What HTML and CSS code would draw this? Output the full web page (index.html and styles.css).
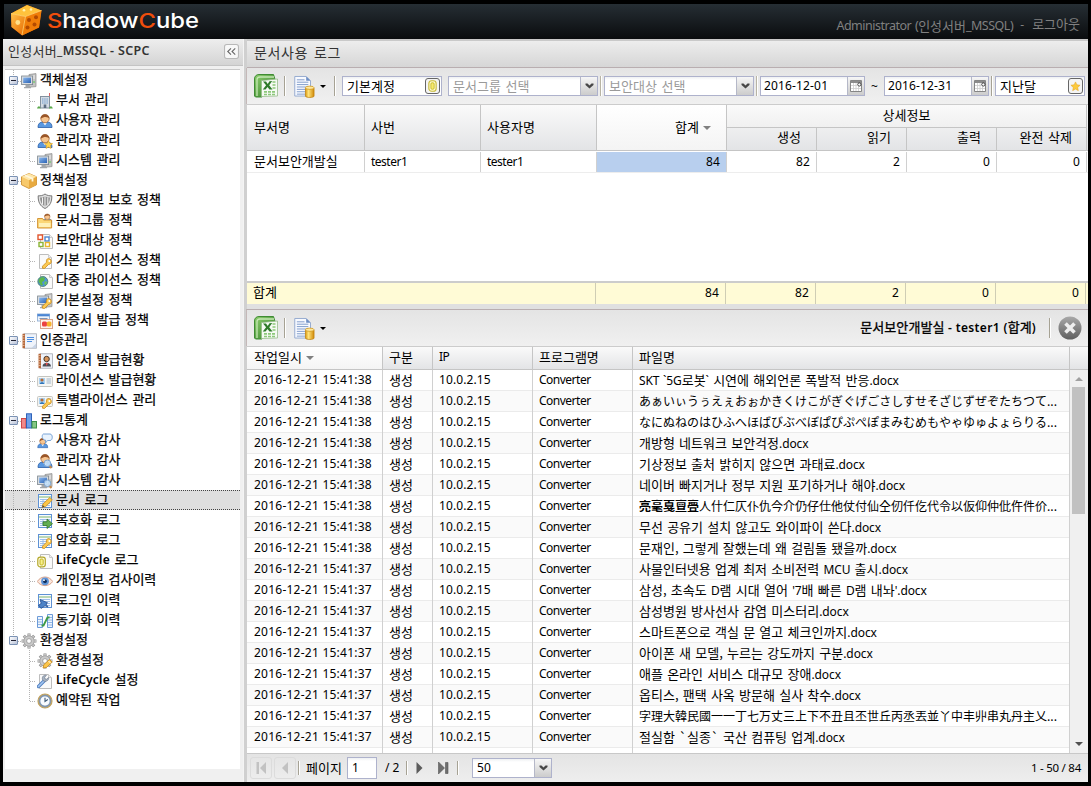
FILE: index.html
```html
<!DOCTYPE html>
<html lang="ko">
<head>
<meta charset="utf-8">
<title>ShadowCube</title>
<link rel="stylesheet" href="styles.css">
</head>
<body>
<svg class="sprite" width="0" height="0">
  <defs>
    <linearGradient id="g-or" x1="0" y1="0" x2="1" y2="1"><stop offset="0" stop-color="#ffc04a"/><stop offset="1" stop-color="#e86a00"/></linearGradient>
    <linearGradient id="g-gr" x1="0" y1="0" x2="1" y2="1"><stop offset="0" stop-color="#8fcf70"/><stop offset="1" stop-color="#2f7d24"/></linearGradient>
    <linearGradient id="g-cl" x1="0" y1="0" x2="0" y2="1"><stop offset="0" stop-color="#a8a8a8"/><stop offset="1" stop-color="#606060"/></linearGradient>
    <linearGradient id="g-db" x1="0" y1="0" x2="1" y2="0"><stop offset="0" stop-color="#d99a10"/><stop offset=".35" stop-color="#ffe27a"/><stop offset="1" stop-color="#d08a08"/></linearGradient>
    <linearGradient id="g-bl" x1="0" y1="0" x2="1" y2="1"><stop offset="0" stop-color="#8bb8ee"/><stop offset="1" stop-color="#2a62b4"/></linearGradient>
  </defs>
  <symbol id="p-page" viewBox="0 0 16 16"><path d="M2.5 1.5h9l3 3v11h-12z" fill="#fafafa" stroke="#bdbdbd"/><path d="M11.500 1.500v3h3" fill="#eee" stroke="#ccc"/></symbol>
  <symbol id="p-key" viewBox="0 0 16 16"><path d="M11.500 5.500a3 3 0 0 1 1.500 5.500l-1.500.5-4 4-2-.3v-2l4-4c-.6-2 .6-3.600 2-3.700z" fill="#fbc850" stroke="#c98a20" stroke-width=".8"/><circle cx="12.300" cy="8" r=".9" fill="#fff"/></symbol>
  <symbol id="p-user" viewBox="0 0 16 16"><path d="M1 14.500c0-4 2-5.500 5-5.500h4c3 0 5 1.500 5 5.500z" fill="#5a98e0" stroke="#2a5faa" stroke-width=".8"/><path d="M6 9.500l2 3 2-3z" fill="#fff"/><circle cx="8" cy="5.600" r="4.200" fill="#f7c590" stroke="#9a5a2c" stroke-width=".7"/><path d="M3.700 5.800C3.200 0 12.800 0 12.300 5.800c-1-2-5-2.800-8.600 0z" fill="#9a5628"/></symbol>
  <symbol id="p-pc" viewBox="0 0 16 16"><path d="M8 1.500l7-.9v13l-7 .6z" fill="#c4c4c4" stroke="#8c8c8c" stroke-width=".7"/><path d="M10 3h4M12 5h2" stroke="#eee"/><rect x=".6" y="3" width="11" height="8.600" fill="#d8dce0" stroke="#7c858e" stroke-width=".8"/><rect x="2.200" y="4.600" width="7.800" height="5.400" fill="url(#g-bl)"/><path d="M4.500 12h3.500v2H10v1.200H3V14h1.500z" fill="#a2a6aa"/><circle cx="13" cy="9" r=".8" fill="#4c4"/></symbol>
  <symbol id="p-sheet" viewBox="0 0 16 16"><rect x="1.500" y="1.500" width="13" height="13" fill="#f8fbff" stroke="#5f92d4"/><path d="M2 4h12" stroke="#7fb56d"/><path d="M3 6.500h10M3 8.500h10M3 10.500h10M3 12.500h10M6 6v7" stroke="#96b9e6" stroke-width=".9"/></symbol>
  <symbol id="p-card" viewBox="0 0 16 16"><rect x=".6" y="3.500" width="14.800" height="10" rx=".8" fill="#f7f7f4" stroke="#c5c5c0"/><rect x="2" y="5" width="6" height="6" fill="#a9d1f2"/><circle cx="5" cy="7" r="1.600" fill="#b36c3a"/><path d="M2.800 11c0-2.500 4.400-2.500 4.400 0z" fill="#2e74b8"/><path d="M9.500 6h4.500M9.500 8h4.500M9.500 10h4.500" stroke="#9fb6cc"/></symbol>
  <symbol id="p-gear" viewBox="0 0 16 16"><path d="M8 .6v14.800M.6 8h14.800M2.800 2.800l10.400 10.400M13.200 2.800L2.800 13.200" stroke="#8c8c8c" stroke-width="3"/><path d="M8 1.100v13.800M1.100 8h13.800M3.200 3.200l9.600 9.600M12.800 3.200l-9.600 9.600" stroke="#c9c9c9" stroke-width="1.800"/><circle cx="8" cy="8" r="5.200" fill="#c9c9c9" stroke="#989898" stroke-width=".7"/><circle cx="8" cy="8" r="2.400" fill="#fff" stroke="#929292" stroke-width=".8"/></symbol>
  <symbol id="p-lens" viewBox="0 0 16 16"><path d="M12 12.500l2.500 2.500" stroke="#c88a4a" stroke-width="2"/><circle cx="10.400" cy="10.300" r="3.300" fill="#c6e2fb" fill-opacity=".9" stroke="#7fa5d0"/></symbol>
  <symbol id="p-book" viewBox="0 0 16 16"><rect x="3" y=".8" width="12.400" height="14.400" fill="#eff3fa" stroke="#a4a9b2" stroke-width=".8"/><rect x="1.500" y=".8" width="2.500" height="14.400" fill="#b5673b"/><path d="M.8 2.500h2.700M.8 5h2.700M.8 7.500h2.700M.8 10h2.700M.8 12.500h2.700" stroke="#e8c3a4" stroke-width=".8"/></symbol>

  <symbol id="i-dept" viewBox="0 0 16 16"><path d="M12.500 0v3" stroke="#e06060"/><rect x="3.500" y="3.500" width="9" height="11.500" fill="#d5dce4" stroke="#83909e"/><path d="M5 6h6M5 8h6M5 10h6" stroke="#6f9bcc" stroke-dasharray="1.500 .7"/><rect x="6.700" y="11.500" width="2.600" height="3.500" fill="#5b6c80"/><path d="M0 15.400c1-3 3-3 3.600 0zM12 15.400c.8-3 3-3 3.800 0z" fill="#5aa84a"/></symbol>
  <symbol id="i-admin" viewBox="0 0 16 16"><use href="#p-user"/><path d="M11.500 7.700l1.300 2.500 2.800.4-2 2 .4 2.800-2.500-1.300L9 15.400l.4-2.800-2-2 2.800-.4z" fill="#ffd34e" stroke="#dd9c1c" stroke-width=".6"/></symbol>
  <symbol id="i-box" viewBox="0 0 16 16"><path d="M8 .5l7.500 3.300v8L8 15.500.5 11.800v-8z" fill="#f7c96c" stroke="#c98622" stroke-width=".8"/><path d="M8 .5l7.500 3.300L8 7.200.5 3.800z" fill="#ffe7a8"/><path d="M8 7.200v8.100l7.300-3.600V3.900z" fill="#e8aa40"/><path d="M4 2.300l7.500 3.300v3" stroke="#fff6da" stroke-width="1.800" fill="none"/></symbol>
  <symbol id="i-shield" viewBox="0 0 16 16"><path d="M8 1c2 1.500 4.500 2 6.800 1.800C15 9 13 13 8 15.500 3 13 1 9 1.200 2.800 3.500 3 6 2.500 8 1z" fill="#e0e0e0" stroke="#777"/><path d="M8 3c1.500 1 3 1.500 5 1.500-.2 4-1.500 7-5 9-3.500-2-4.800-5-5-9C5 4.500 6.700 4 8 3z" fill="#8f8f8f"/><path d="M5.500 4.500v7M8 3v10.500M10.800 4.500v7" stroke="#f4f4f4"/></symbol>
  <symbol id="i-group" viewBox="0 0 16 16"><use href="#p-user" x="5" y="0" width="10.500" height="10.500"/><path d="M.6 5.500h5l1 1.500h8v8H.6z" fill="#fbd777" stroke="#d08b28" stroke-width=".9"/><path d="M2 10h11.500v4H2z" fill="#fff1b8"/></symbol>
  <symbol id="i-target" viewBox="0 0 16 16"><use href="#p-page" x="1"/><g fill="#fff" stroke-width="1.400"><rect x="1" y="2" width="4.500" height="4.500" stroke="#e2552e"/><rect x="8" y="4" width="4" height="4" stroke="#4d87d0"/><rect x="2" y="9.500" width="4" height="4" stroke="#8ab437"/><rect x="8.500" y="9.500" width="4" height="4" stroke="#e8b62e"/></g></symbol>
  <symbol id="i-lic" viewBox="0 0 16 16"><use href="#p-page"/><use href="#p-key"/></symbol>
  <symbol id="i-multi" viewBox="0 0 16 16"><use href="#p-page" x="1"/><circle cx="5.800" cy="8.500" r="5" fill="#4d94d8" stroke="#457a60" stroke-width=".8"/><path d="M2 6l3-2 3 1-1 3-2 1 1 3-2 .5-2.500-4z" fill="#5cb84a"/><path d="M8 8l2 1-1 3-2-1z" fill="#6cc455"/></symbol>
  <symbol id="i-pckey" viewBox="0 0 16 16"><use href="#p-pc"/><use href="#p-key"/></symbol>
  <symbol id="i-cert" viewBox="0 0 16 16"><rect x=".5" y="1" width="12" height="7" fill="#eef4fb" stroke="#9ab6da"/><path d="M.5 2.200h12" stroke="#4b86d4" stroke-width="2.200"/><path d="M2.500 5.500h8" stroke="#7f95b6"/><rect x="3.500" y="6.500" width="12" height="9" fill="#fff3ec" stroke="#d9a58c"/><rect x="5" y="8.500" width="5" height="5" rx="1.500" fill="#ec4242"/><rect x="9.800" y="8.500" width="4.700" height="5" rx="1.500" fill="#f7b52c"/></symbol>
  <symbol id="i-note" viewBox="0 0 16 16"><use href="#p-book"/><path d="M6 4.500h7M6 6.500h7M6 8.500h5" stroke="#4f8fe0" stroke-width="1.200"/><path d="M10.500 15l4.700-4.500V15z" fill="#c8d4e6"/></symbol>
  <symbol id="i-certs" viewBox="0 0 16 16"><use href="#p-book"/><circle cx="9.600" cy="6" r="2.700" fill="#d8955a" stroke="#46372c"/><path d="M5.500 13.500c0-5 8.500-5 8.500 0z" fill="#4a4e56"/><path d="M8.500 10l1.200 3 1.200-3z" fill="#e55"/></symbol>
  <symbol id="i-special" viewBox="0 0 16 16"><use href="#p-card"/><use href="#p-key"/></symbol>
  <symbol id="i-chart" viewBox="0 0 16 16"><rect x=".5" y="5.500" width="4.500" height="9.500" fill="#f08a8a" stroke="#d04848"/><rect x="5.500" y=".8" width="5" height="14.200" fill="#6fa0e8" stroke="#2f62b8"/><rect x="11" y="8.500" width="4.500" height="6.500" fill="#84c684" stroke="#3c9048"/></symbol>
  <symbol id="i-uaudit" viewBox="0 0 16 16"><use href="#p-user" x="0" y="4" width="11.500" height="12"/><path d="M6.500 1h6.500c3 0 3 6.500 0 6.500h-2.500L8.500 10l.2-2.800C4.500 7 4.500 1.500 6.500 1z" fill="#e9f3fd" stroke="#6c9bd2" stroke-width=".9"/></symbol>
  <symbol id="i-aaudit" viewBox="0 0 16 16"><use href="#p-user"/><use href="#p-lens"/></symbol>
  <symbol id="i-saudit" viewBox="0 0 16 16"><use href="#p-pc"/><use href="#p-lens"/></symbol>
  <symbol id="i-doclog" viewBox="0 0 16 16"><use href="#p-sheet"/><path d="M5 14.500l1-3.500 6.800-6.500 2.500 2.500L8.500 13.700z" fill="#fbc648" stroke="#c88a1c" stroke-width=".8"/><path d="M5 14.500l.8-2.500 1.700 1.700z" fill="#444"/></symbol>
  <symbol id="i-dec" viewBox="0 0 16 16"><use href="#p-sheet"/><path d="M6 8.800h4V6l5.500 4.700-5.500 4.800v-3H6z" fill="#62ae51" stroke="#33762a" stroke-width=".8"/></symbol>
  <symbol id="i-enc" viewBox="0 0 16 16"><use href="#p-sheet"/><use href="#p-key"/></symbol>
  <symbol id="p-cyl" viewBox="0 0 16 16"><rect x="3.500" y="1.500" width="9" height="13" rx="3.500" fill="#fffbd0" stroke="#c9bb3a" stroke-width="1.400"/><rect x="6" y="4" width="4" height="8" rx="1.500" fill="#f5ea70" stroke="#c4b423"/></symbol>
  <symbol id="i-life" viewBox="0 0 16 16"><use href="#p-page" x="1"/><rect x=".8" y="4.200" width="7.500" height="9.600" rx="2.400" fill="#fffde2" stroke="#b3a72a" stroke-width="1.200"/><rect x="3" y="6" width="3.200" height="6" rx="1" fill="#f7f08a" stroke="#c4b423"/></symbol>
  <symbol id="i-eye" viewBox="0 0 16 16"><path d="M.3 8.500C4 2.500 12 2.500 15.700 8.500 12 14 4 14 .3 8.500z" fill="#fbe6dc" stroke="#d7a28a"/><circle cx="8" cy="8.300" r="3.900" fill="#5e93d6"/><circle cx="8" cy="8.300" r="1.900" fill="#12305c"/><circle cx="7" cy="7.200" r=".9" fill="#fff"/></symbol>
  <symbol id="i-login" viewBox="0 0 16 16"><use href="#p-sheet"/><path d="M3 6.500l7.500 3.300-1.500 1.200 2 3-3-1.200-4 2.600-2.500-3.200 2.800-1.700z" fill="#4c83c8" stroke="#244f92" stroke-width=".8"/></symbol>
  <symbol id="i-sync" viewBox="0 0 16 16"><path d="M.5 3.500h5v11h-5zM10.500 1.500h5v13h-5z" fill="#edf4fd" stroke="#6c9bd8"/><path d="M1 6.500h4M1 9h4M1 11.500h4M11 4.500h4M11 7h4M11 9.500h4M11 12h4" stroke="#93b7e4"/><path d="M4.500 12.500h2l4-8h2" stroke="#3d9a44" stroke-width="1.800" fill="none"/></symbol>
  <symbol id="i-set" viewBox="0 0 16 16"><use href="#p-gear"/><path d="M6 15l.8-3.300L12.500 6.500l2.600 2.600-5.500 5.300z" fill="#fbc54a" stroke="#c88a1c" stroke-width=".8"/><path d="M11.500 8l2.200 2.200" stroke="#fff"/></symbol>
  <symbol id="i-wrench" viewBox="0 0 16 16"><use href="#p-page"/><path d="M1.500 13.500l6-6" stroke="#4f7fc0" stroke-width="3.400" stroke-linecap="round"/><path d="M1.500 13.500l6-6" stroke="#a4c6f0" stroke-width="1.600" stroke-linecap="round"/><path d="M11.500 4.500L9.700 6.200l-1.800-.4-.3-1.600 1.800-1.800c-2-.8-4.600.9-4 3.800.4 1.800 2.600 2.800 4.300 1.800 1.600-.7 2.200-2.200 1.800-3.500z" fill="#a9b5c4" stroke="#6e7a8c" stroke-width=".7"/></symbol>
  <symbol id="i-clock" viewBox="0 0 16 16"><circle cx="8" cy="8" r="7" fill="#8e98a2" stroke="#c4a35c" stroke-width="1.200"/><circle cx="8" cy="8" r="5.100" fill="#f8fbff" stroke="#6e8fb6" stroke-width=".8"/><path d="M8 4.800V8.500l2.800-2" stroke="#3b5876" stroke-width="1.100" fill="none"/></symbol>

  <symbol id="t-excel" viewBox="0 0 24 24"><path d="M5 .5h14.500l1.500 5-13 1V23H1.500L.5 22V5C.5 2 2.500.5 5 .5z" fill="url(#g-gr)" stroke="#3f8b34"/><path d="M3 22V6c0-2 1-3 3-3h14" stroke="#c5e8b4" stroke-width="1.300" fill="none"/><path d="M7.500 6.500l16-1.500v17l-16 .5z" fill="#f5faf3" stroke="#98bd8c" stroke-width=".8"/><path d="M18.500 8h4M18.500 11h4M18.500 14h4M10 17.800h12M10 20.500h12" stroke="#8cc87a" stroke-width="1.700" stroke-dasharray="3 1"/><path d="M9 7.500h3l1.700 2.500L15.500 7.300l2.700-.3-3 4.200 3.300 4.300h-3l-2-2.600-2 2.600H8.800l3.300-4.300z" fill="#2f7a2a"/></symbol>
  <symbol id="t-doc" viewBox="0 0 22 24"><path d="M.8 1.500h12l4.500 4.500v16H.8z" fill="#f8faff" stroke="#93a9cf"/><path d="M12.800 1.500v4.500h4.500z" fill="#6d8ec4"/><path d="M3 5h8M3 7.500h12M3 10h12M3 12.500h12M3 15h9M3 17.500h9M3 20h9" stroke="#7f9bcb"/><path d="M12 13.500h9v8.500c0 2-9 2-9 0z" fill="url(#g-db)" stroke="#c0810c" stroke-width=".8"/><ellipse cx="16.500" cy="13.300" rx="4.500" ry="1.700" fill="#ffe9a0" stroke="#cf9418" stroke-width=".8"/></symbol>
  <symbol id="t-cal" viewBox="0 0 12 12"><path d="M.5.500h11v11H.5z" fill="#fff" stroke="#858585"/><path d="M1 2h10" stroke="#8b8b8b" stroke-width="2"/><path d="M3.500 3v8M6 3v8M8.500 6.500V11M1 5.500h6M1 8.500h10" stroke="#ccc" stroke-width=".8"/><circle cx="9.300" cy="4.500" r="1.600" fill="#fff" stroke="#333" stroke-width=".9"/></symbol>
  <symbol id="t-arr" viewBox="0 0 9 6"><path d="M.5.500h2l2 2 2-2h2v1.500l-4 3.500-4-3.500z" fill="#474747"/></symbol>
  <symbol id="t-star" viewBox="0 0 12 12"><path d="M6 1l1.500 3.200 3.500.4-2.600 2.400.7 3.500L6 8.800l-3.100 1.700.7-3.500L1 4.600l3.500-.4z" fill="#fcca3c" stroke="#e6a626" stroke-width=".6"/></symbol>
</svg>

<div class="app">
  <header class="top">
    <svg class="logo" width="200" height="35" viewBox="0 0 200 35">
      <path d="M7 9.500L23 1l14.500 5.500-2.500 17-17 8L7.500 23z" fill="#d95c00"/>
      <path d="M7 9.500L23 1l14.500 5.500-16 6z" fill="#ffc23c"/>
      <path d="M7 9.500l14.500 3L18 31 7.500 23z" fill="url(#g-or)"/>
      <path d="M21.500 12.500l16-6-2.500 17-17 8z" fill="#ef7d08"/>
      <path d="M7 9.500l14.500 3 16-6M21.500 12.500L18 31" stroke="#ffd777" stroke-width=".8" fill="none"/>
      <g fill="#b24a00"><circle cx="25" cy="16" r="2"/><circle cx="32" cy="13.300" r="2"/><circle cx="23.500" cy="23.500" r="2"/><circle cx="30.500" cy="20.500" r="2"/></g>
      <circle cx="13.800" cy="18.500" r="2.400" fill="#ffe08a"/>
      <g fill="#fff2b0"><circle cx="20" cy="6.300" r="1.300"/><circle cx="27" cy="5.500" r="1.300"/></g>
      <text class="logo-text" x="43" y="23.500" textLength="152" lengthAdjust="spacingAndGlyphs"><tspan fill="#f04e0c">S</tspan>hadow<tspan fill="#f04e0c">C</tspan>ube</text>
    </svg>
    <div class="who"><span class="a">Administrator (</span><span class="k">인성서버</span><span class="a">_MSSQL)</span><span class="out"> - <span class="k">로그아웃</span></span></div>
  </header>

  <div class="body">
    <aside class="side">
      <div class="side-title"><span class="k">인성서버</span><b>_MSSQL - SCPC</b>
        <svg class="fold" width="15" height="15" viewBox="0 0 14 14"><rect x=".5" y=".5" width="13" height="13" rx="2" fill="#f8f8f8" stroke="#b8b8b8"/><path d="M6.500 4L3.500 7l3 3M10.500 4L7.500 7l3 3" stroke="#666" fill="none"/></svg>
      </div>
      <ul class="tree">
        <li class="node first"><i class="exp"></i><svg><use href="#p-pc"/></svg><span>객체설정</span></li>
        <li class="leaf"><svg><use href="#i-dept"/></svg><span>부서 관리</span></li>
        <li class="leaf"><svg><use href="#p-user"/></svg><span>사용자 관리</span></li>
        <li class="leaf"><svg><use href="#i-admin"/></svg><span>관리자 관리</span></li>
        <li class="leaf last"><svg><use href="#p-pc"/></svg><span>시스템 관리</span></li>
        <li class="node"><i class="exp"></i><svg><use href="#i-box"/></svg><span>정책설정</span></li>
        <li class="leaf"><svg><use href="#i-shield"/></svg><span>개인정보 보호 정책</span></li>
        <li class="leaf"><svg><use href="#i-group"/></svg><span>문서그룹 정책</span></li>
        <li class="leaf"><svg><use href="#i-target"/></svg><span>보안대상 정책</span></li>
        <li class="leaf"><svg><use href="#i-lic"/></svg><span>기본 라이선스 정책</span></li>
        <li class="leaf"><svg><use href="#i-multi"/></svg><span>다중 라이선스 정책</span></li>
        <li class="leaf"><svg><use href="#i-pckey"/></svg><span>기본설정 정책</span></li>
        <li class="leaf last"><svg><use href="#i-cert"/></svg><span>인증서 발급 정책</span></li>
        <li class="node"><i class="exp"></i><svg><use href="#i-note"/></svg><span>인증관리</span></li>
        <li class="leaf"><svg><use href="#i-certs"/></svg><span>인증서 발급현황</span></li>
        <li class="leaf"><svg><use href="#p-card"/></svg><span>라이선스 발급현황</span></li>
        <li class="leaf last"><svg><use href="#i-special"/></svg><span>특별라이선스 관리</span></li>
        <li class="node"><i class="exp"></i><svg><use href="#i-chart"/></svg><span>로그통계</span></li>
        <li class="leaf"><svg><use href="#i-uaudit"/></svg><span>사용자 감사</span></li>
        <li class="leaf"><svg><use href="#i-aaudit"/></svg><span>관리자 감사</span></li>
        <li class="leaf"><svg><use href="#i-saudit"/></svg><span>시스템 감사</span></li>
        <li class="leaf sel"><svg><use href="#i-doclog"/></svg><span>문서 로그</span></li>
        <li class="leaf"><svg><use href="#i-dec"/></svg><span>복호화 로그</span></li>
        <li class="leaf"><svg><use href="#i-enc"/></svg><span>암호화 로그</span></li>
        <li class="leaf"><svg><use href="#i-life"/></svg><span><b>LifeCycle</b> 로그</span></li>
        <li class="leaf"><svg><use href="#i-eye"/></svg><span>개인정보 검사이력</span></li>
        <li class="leaf"><svg><use href="#i-login"/></svg><span>로그인 이력</span></li>
        <li class="leaf last"><svg><use href="#i-sync"/></svg><span>동기화 이력</span></li>
        <li class="node end"><i class="exp"></i><svg><use href="#p-gear"/></svg><span>환경설정</span></li>
        <li class="leaf end"><svg><use href="#i-set"/></svg><span>환경설정</span></li>
        <li class="leaf end"><svg><use href="#i-wrench"/></svg><span><b>LifeCycle</b> 설정</span></li>
        <li class="leaf end last"><svg><use href="#i-clock"/></svg><span>예약된 작업</span></li>
      </ul>
    </aside>

    <main class="main">
      <div class="title k">문서사용 로그</div>
      <div class="bar">
        <svg class="xl"><use href="#t-excel"/></svg><i class="sep"></i>
        <svg class="doc"><use href="#t-doc"/></svg><i class="drop"></i><i class="sep s2"></i>
        <div class="field acct k">기본계정<span class="badge"><svg width="13" height="14"><use href="#p-cyl"/></svg></span></div>
        <div class="field combo ph k">문서그룹 선택<span class="trig"><svg width="9" height="6"><use href="#t-arr"/></svg></span></div><i class="sep s3"></i>
        <div class="field combo ph k">보안대상 선택<span class="trig"><svg width="9" height="6"><use href="#t-arr"/></svg></span></div><i class="sep s3"></i>
        <div class="field date n">2016-12-01<span class="trig"><svg width="12" height="12"><use href="#t-cal"/></svg></span></div>
        <span class="tilde">~</span>
        <div class="field date n">2016-12-31<span class="trig"><svg width="12" height="12"><use href="#t-cal"/></svg></span></div><i class="sep s4"></i>
        <div class="field month k">지난달<span class="badge"><svg width="11" height="11"><use href="#t-star"/></svg></span></div>
      </div>

      <div class="ghead g1 k">
        <div>부서명</div><div>사번</div><div>사용자명</div><div class="r sorted">합계<i class="sort"></i></div>
        <div class="det">
          <div class="dt">상세정보</div>
          <div class="dc"><span>생성</span><span>읽기</span><span>출력</span><span>완전 삭제</span></div>
        </div>
      </div>
      <div class="grow">
        <div class="k">문서보안개발실</div><div class="a">tester1</div><div class="a">tester1</div><div class="r n hit">84</div><div class="r n">82</div><div class="r n">2</div><div class="r n">0</div><div class="r n">0</div>
      </div>
      <div class="blank"></div>
      <div class="gsum"><div class="k">합계</div><div class="r n">84</div><div class="r n">82</div><div class="r n">2</div><div class="r n">0</div><div class="r n">0</div></div>
      <div class="split"></div>

      <div class="bar b2">
        <svg class="xl"><use href="#t-excel"/></svg><i class="sep"></i>
        <svg class="doc"><use href="#t-doc"/></svg><i class="drop"></i>
        <div class="who2"><span class="km">문서보안개발실</span><b> - tester1 (</b><span class="km">합계</span><b>)</b></div>
        <i class="sep"></i>
        <svg class="close" width="24" height="24" viewBox="0 0 24 24"><circle cx="12" cy="12" r="11.500" fill="url(#g-cl)"/><path d="M7.500 7.500l9 9M16.500 7.500l-9 9" stroke="#eee" stroke-width="3.600"/></svg>
      </div>
      <div class="ghead g2 k"><div class="sorted">작업일시<i class="sort"></i></div><div>구분</div><div class="a">IP</div><div>프로그램명</div><div>파일명</div><div></div></div>
      <div class="list">
        <div class="rows">
          <div class="row"><span>2016-12-21 15:41:38</span><span>생성</span><span>10.0.2.15</span><span>Converter</span><span><a>SKT `5G</a>로봇<a>`</a> 시연에 해외언론 폭발적 반응<a>.docx</a></span></div>
          <div class="row"><span>2016-12-21 15:41:38</span><span>생성</span><span>10.0.2.15</span><span>Converter</span><span class="ja">あぁいぃうぅえぇおぉかきくけこがぎぐげごさしすせそざじずぜぞたちつて...</span></div>
          <div class="row"><span>2016-12-21 15:41:38</span><span>생성</span><span>10.0.2.15</span><span>Converter</span><span class="ja">なにぬねのはひふへほばびぶべぼぱぴぷぺぽまみむめもやゃゆゅよょらりる...</span></div>
          <div class="row"><span>2016-12-21 15:41:38</span><span>생성</span><span>10.0.2.15</span><span>Converter</span><span>개방형 네트워크 보안걱정<a>.docx</a></span></div>
          <div class="row"><span>2016-12-21 15:41:38</span><span>생성</span><span>10.0.2.15</span><span>Converter</span><span>기상정보 출처 밝히지 않으면 과태료<a>.docx</a></span></div>
          <div class="row"><span>2016-12-21 15:41:38</span><span>생성</span><span>10.0.2.15</span><span>Converter</span><span>네이버 빠지거나 정부 지원 포기하거나 해야<a>.docx</a></span></div>
          <div class="row"><span>2016-12-21 15:41:38</span><span>생성</span><span>10.0.2.15</span><span>Converter</span><span class="ja"><b>亮毫戛亶亹</b>人什仁仄仆仇今介仍仔仕他仗付仙仝仞仟仡代令以仮仰仲仳仵件价...</span></div>
          <div class="row"><span>2016-12-21 15:41:38</span><span>생성</span><span>10.0.2.15</span><span>Converter</span><span>무선 공유기 설치 않고도 와이파이 쓴다<a>.docx</a></span></div>
          <div class="row"><span>2016-12-21 15:41:38</span><span>생성</span><span>10.0.2.15</span><span>Converter</span><span>문재인, 그렇게 잘했는데 왜 걸림돌 됐을까<a>.docx</a></span></div>
          <div class="row"><span>2016-12-21 15:41:37</span><span>생성</span><span>10.0.2.15</span><span>Converter</span><span>사물인터넷용 업계 최저 소비전력 <a>MCU</a> 출시<a>.docx</a></span></div>
          <div class="row"><span>2016-12-21 15:41:37</span><span>생성</span><span>10.0.2.15</span><span>Converter</span><span>삼성, 초속도 <a>D</a>램 시대 열어 <a>'7</a>배 빠른 <a>D</a>램 내놔<a>'.docx</a></span></div>
          <div class="row"><span>2016-12-21 15:41:37</span><span>생성</span><span>10.0.2.15</span><span>Converter</span><span>삼성병원 방사선사 감염 미스터리<a>.docx</a></span></div>
          <div class="row"><span>2016-12-21 15:41:37</span><span>생성</span><span>10.0.2.15</span><span>Converter</span><span>스마트폰으로 객실 문 열고 체크인까지<a>.docx</a></span></div>
          <div class="row"><span>2016-12-21 15:41:37</span><span>생성</span><span>10.0.2.15</span><span>Converter</span><span>아이폰 새 모델, 누르는 강도까지 구분<a>.docx</a></span></div>
          <div class="row"><span>2016-12-21 15:41:37</span><span>생성</span><span>10.0.2.15</span><span>Converter</span><span>애플 온라인 서비스 대규모 장애<a>.docx</a></span></div>
          <div class="row"><span>2016-12-21 15:41:37</span><span>생성</span><span>10.0.2.15</span><span>Converter</span><span>옵티스, 팬택 사옥 방문해 실사 착수<a>.docx</a></span></div>
          <div class="row"><span>2016-12-21 15:41:37</span><span>생성</span><span>10.0.2.15</span><span>Converter</span><span class="ja">字理大韓民國一一丁七万丈三上下不丑且丕世丘丙丞丟並丫中丰丱串丸丹主乂...</span></div>
          <div class="row"><span>2016-12-21 15:41:37</span><span>생성</span><span>10.0.2.15</span><span>Converter</span><span>절실함 `실종` 국산 컴퓨팅 업계<a>.docx</a></span></div>
          <div class="row"><span></span><span></span><span></span><span></span><span></span></div>
        </div>
        <div class="scroll"><i class="up"></i><i class="thumb"></i><i class="down"></i></div>
      </div>
      <div class="pager">
        <div class="pb off"><svg width="11" height="12" viewBox="0 0 11 12"><path d="M.5 0h2.500v12H.5zM10 0v12L4 6z" fill="#c2c2c2"/></svg></div>
        <div class="pb off"><svg width="11" height="12" viewBox="0 0 11 12"><path d="M8 0v12L2 6z" fill="#c2c2c2"/></svg></div>
        <i class="sep p1"></i><span class="k pl">페이지</span><div class="field pg n">1</div><span class="of">/ 2</span><i class="sep p2"></i>
        <svg class="nx" width="7" height="12" viewBox="0 0 7 12"><path d="M.5 0v12l6-6z" fill="#5c5c5c"/></svg>
        <svg class="lx" width="11" height="12" viewBox="0 0 11 12"><path d="M.5 0v12l6-6zM7.500.5h2.500v11H7.500z" fill="#6e6e6e" stroke="#555" stroke-width=".6"/></svg>
        <i class="sep p3"></i>
        <div class="field cnt n">50<span class="trig"><svg width="9" height="6"><use href="#t-arr"/></svg></span></div>
        <span class="tot">1 - 50 / 84</span>
      </div>
    </main>
  </div>
</div>
</body>
</html>
```
FILE: styles.css
```css
* { box-sizing: border-box; }
body { margin: 0; width: 1091px; height: 786px; overflow: hidden; background: #000; font: 12px/20px "Noto Sans", "Noto Sans CJK KR", sans-serif; color: #000; }
i { font-style: normal; flex: none; }
svg { flex: none; display: block; }
.sprite { position: absolute; }
.app { padding: 4px 3px 4px; height: 786px; display: flex; flex-direction: column; }
.k, .km { font-family: "Noto Sans CJK KR", sans-serif; font-size: 13px; word-spacing: 1px; }
.km { -webkit-text-stroke: .3px; letter-spacing: .1px; }
.a { font-family: "Noto Sans", sans-serif; font-size: 12px; letter-spacing: -.5px; }
.n { font-family: "Noto Sans", sans-serif; font-size: 12px; letter-spacing: .1px; }

.top { height: 35px; flex: none; background: linear-gradient(#262e34, #0a0c0e); display: flex; justify-content: space-between; margin-left: 1px; }
.logo-text { font: 500 20.500px "Inter", sans-serif; fill: #fff; }
.who { color: #808080; padding: 12px 8px 0 0; display: flex; font-size: 12px; }
.who .a { font-size: 12.500px; letter-spacing: -.5px; }
.who .a:first-child { word-spacing: 1px; }
.out { margin-left: 7px; word-spacing: 5px; margin-top: -2px; }

.body { flex: 1; display: flex; min-height: 0; background: #f0f0f0; }
.side { width: 241px; border-right: 1px solid #f4f4f4; flex: none; }
.side-title { height: 27px; margin-bottom: 3px; background: linear-gradient(#eee, #d4d4d4); border-bottom: 1px solid #c4c4c4; display: flex; align-items: center; padding: 0 4px 2px 5px; color: #333; }
.side-title b { font-size: 12.500px; letter-spacing: .35px; font-weight: 600; }
.side-title .k { letter-spacing: .3px; }
.fold { margin-left: auto; }
.tree { list-style: none; margin: 0 3px 0 2px; padding: 0; height: 700px; background: #fff; border-top: 1px solid #c8c8c8; }
.tree li { height: 20px; display: flex; align-items: center; font: 13px/20px "Noto Sans CJK KR", sans-serif; -webkit-text-stroke: .25px; word-spacing: 1px; background-repeat: no-repeat; --v: repeating-linear-gradient(#b4b4b4 0 1px, transparent 1px 2px); --h: repeating-linear-gradient(90deg, #b4b4b4 0 1px, transparent 1px 2px); }
.tree svg { width: 16px; height: 16px; margin-right: 3px; margin-top: 1px; }
.tree b { font: 600 12px "Noto Sans", sans-serif; letter-spacing: .2px; -webkit-text-stroke: 0; }
.tree span { margin-top: -2px; }
.node { padding-left: 4px; background-image: var(--v), var(--h); background-size: 1px 20px, 4px 1px; background-position: 8px 0, 13px 11px; }
.node.end { background-size: 1px 10px, 4px 1px; }
.leaf { padding-left: 32px; background-image: var(--v), var(--v), var(--h); background-size: 1px 20px, 1px 20px, 6px 1px; background-position: 8px 0, 24px 0, 25px 11px; }
.leaf.last { background-size: 1px 20px, 1px 11px, 6px 1px; }
.leaf.end { background-size: 0 0, 1px 20px, 6px 1px; }
.leaf.end.last { background-size: 0 0, 1px 11px, 6px 1px; }
.leaf.sel { background-color: #dfdfdf; border: dotted #444; border-width: 1px 0; background-position: 8px 0, 24px 0, 25px 10px; }
.exp { width: 9px; height: 9px; margin: 1px 3px 0 0; border: 1px solid #7b92b4; border-radius: 1px; background: linear-gradient(#223, #223) center/5px 1px no-repeat, linear-gradient(135deg, #fff, #b8c2d8); }

.main { flex: 1; min-width: 0; border-left: 3px solid #d0d0d0; display: flex; flex-direction: column; background: #fff; }
.title { height: 29px; flex: none; background: linear-gradient(#c9c9c9 0 2px, #ededed 2px, #d6d6d6); border-bottom: 1px solid #b9aeb0; padding: 3px 7px; color: #333; font-size: 14px; letter-spacing: .6px; word-spacing: 1.500px; }
.bar { height: 36px; flex: none; display: flex; align-items: center; background: linear-gradient(#e4e4e4, #f0f0f0); padding-left: 7px; border-left: 1px solid #c4b8b8; margin-left: -1px; }
.b2 { border-top: 1px solid #b9aeb0; height: 37px; }
.xl { width: 24px; height: 24px; }
.doc { width: 21px; height: 23px; margin-left: 9px; }
.sep { width: 1px; height: 20px; background: #a6a294; box-shadow: 1px 0 #fff; margin-left: 6px; }
.s2 { margin-left: 8px; margin-right: 7px; }
.drop { width: 0; border: 3px solid transparent; border-top-color: #000; border-bottom: 0; margin-left: 5px; }
.field { height: 20px; flex: none; background: linear-gradient(#eef0f2, #fff 3px); border: 1px solid #aeb2cc; padding-left: 4px; line-height: 18px; display: flex; }
.trig { margin-left: auto; width: 17px; border-left: 1px solid #b5b8c8; background: linear-gradient(#f6f6f6, #ccc); display: grid; place-items: center; }
.badge { margin: 1px 1px 0 auto; width: 15px; height: 16px; border: 1px solid #666; border-radius: 3px; background: #f4f4f4; display: grid; place-items: center; }
.acct { width: 100px; margin-right: 6px; }
.combo { width: 150px; }
.ph { color: #9a9a9a; }
.s3 { margin: 0 3px 0 2px; background: #b8b4a4; }
.date { width: 105px; padding-left: 3px; letter-spacing: .15px; }
.tilde { width: 19px; text-align: center; padding-top: 2px; }
.date + .s4 { margin: 0 3px 0 2px; }
.month { width: 90px; }

.ghead { display: grid; flex: none; border-top: 1px solid #ccc; border-bottom: 1px solid #c5c5c5; background: linear-gradient(#fafafa, #e3e4e6); }
.ghead > div { border-right: 1px solid #c5c5c5; padding-left: 6px; }
.ghead > div:first-child { padding-left: 7px; }
.g1 { grid-template-columns: 118px 116px 116px 130px 360px; height: 47px; line-height: 43px; }
.g1 .r { padding-right: 15px; }
.ghead .sorted { background: linear-gradient(#fff, #f4f4f4); }
.r { text-align: right; }
.sort { display: inline-block; border: 4px solid transparent; border-top: 4px solid #808080; border-bottom: 0; margin: 0 0 2px 4px; }
.ghead .det { padding: 0; line-height: 20px; }
.dt { height: 23px; border-bottom: 1px solid #c5c5c5; text-align: center; background: linear-gradient(#fafafa, #f0f0f0); }
.dc { display: grid; grid-template-columns: 90px 90px 90px 90px; }
.dc span { text-align: right; padding-right: 15px; height: 22px; border-right: 1px solid #c5c5c5; line-height: 18px; }
.dc span:last-child { border-right: 0; }
.grow { display: grid; grid-template-columns: 118px 116px 116px 130px repeat(4, 90px); height: 22px; flex: none; border-bottom: 1px solid #ededed; line-height: 20px; }
.grow div { border-right: 1px solid #d0d0d0; padding: 0 6px; margin-top: 1px; }
.grow div:first-child { padding-left: 7px; line-height: 18px; }
.grow .hit { background: #b8cfee; }
.blank { height: 108px; flex: none; }
.gsum { height: 23px; flex: none; display: grid; grid-template-columns: 349px 130px repeat(4, 90px); background: #fffbd6; border-top: 2px solid #ccc; line-height: 20px; }
.gsum div { border-right: 1px solid #cfcdb4; padding: 0 6px; }
.gsum div:first-child { line-height: 18px; }
.split { height: 5px; flex: none; background: #e0e0e0; }
.who2 { margin-left: auto; display: flex; white-space: pre; }
.who2 b { font-weight: 600; letter-spacing: .35px; }
.who2 .km { margin-top: -1px; }
.who2 + .sep { margin-left: 13px; margin-right: 8px; }
.close { margin-right: 6px; }
.g2 { grid-template-columns: 136px 50px 100px 100px 437px 1fr; height: 24px; line-height: 20px; }
.g2 > div:last-child { border-right: 0; }
.list { flex: 1; min-height: 0; display: flex; overflow: hidden; }
.rows { width: 823px; }
.row { display: grid; grid-template-columns: 136px 50px 100px 100px 437px; height: 21px; border-bottom: 1px solid #ebebeb; line-height: 20px; }
.row:nth-child(even) { background: #fafafa; }
.row > span { border-right: 1px solid #d0d0d0; padding-left: 6px; white-space: nowrap; overflow: hidden; height: 21px; }
.row > span:nth-child(1) { letter-spacing: .24px; padding-left: 7px; }
.row > span:nth-child(2), .row > span:nth-child(5) { font: 13px/19px "Noto Sans CJK KR", sans-serif; word-spacing: .6px; }
.row > span:nth-child(3) { letter-spacing: .1px; }
.row > span:nth-child(4) { letter-spacing: -.5px; }
.row a { font: 12px/19px "Noto Sans", sans-serif; letter-spacing: -.1px; }
.row > span.ja { font: 12px/19px "Noto Sans CJK JP", sans-serif !important; }
.row > span.ja b { font-weight: 700; }
.scroll { flex: 1; background: #f0f0f0; display: flex; flex-direction: column; align-items: center; padding-right: 1px; }
.up { border: 4px solid transparent; border-bottom-color: #a0a0a0; border-top: 0; margin-top: 7px; }
.thumb { width: 13px; height: 127px; background: #c1c1c1; margin-top: 6px; }
.down { border: 4px solid transparent; border-top-color: #505050; border-bottom: 0; margin: auto 0 7px; }
.pager { height: 29px; flex: none; display: flex; align-items: center; border-top: 1px solid #c8c8c8; background: linear-gradient(#e4e4e4, #eee); padding-left: 3px; }
.pb { width: 22px; height: 22px; border: 1px solid #dcdcdc; border-radius: 3px; margin-right: 2px; display: grid; place-items: center; }
.pager .sep { height: 14px; }
.pager .p1 { margin-left: 0; margin-right: 7px; }
.pl { width: 41px; margin-top: -1px; }
.pg { width: 30px; height: 22px; line-height: 20px; }
.of { margin-left: 8px; width: 19px; }
.pager .p2 { margin-left: 2px; margin-right: 9px; }
.lx { margin-left: 15px; }
.pager .p3 { margin-left: 8px; margin-right: 14px; }
.cnt { width: 80px; }
.tot { margin-left: auto; padding-right: 7px; font-size: 11.500px; letter-spacing: -.25px; }
```
